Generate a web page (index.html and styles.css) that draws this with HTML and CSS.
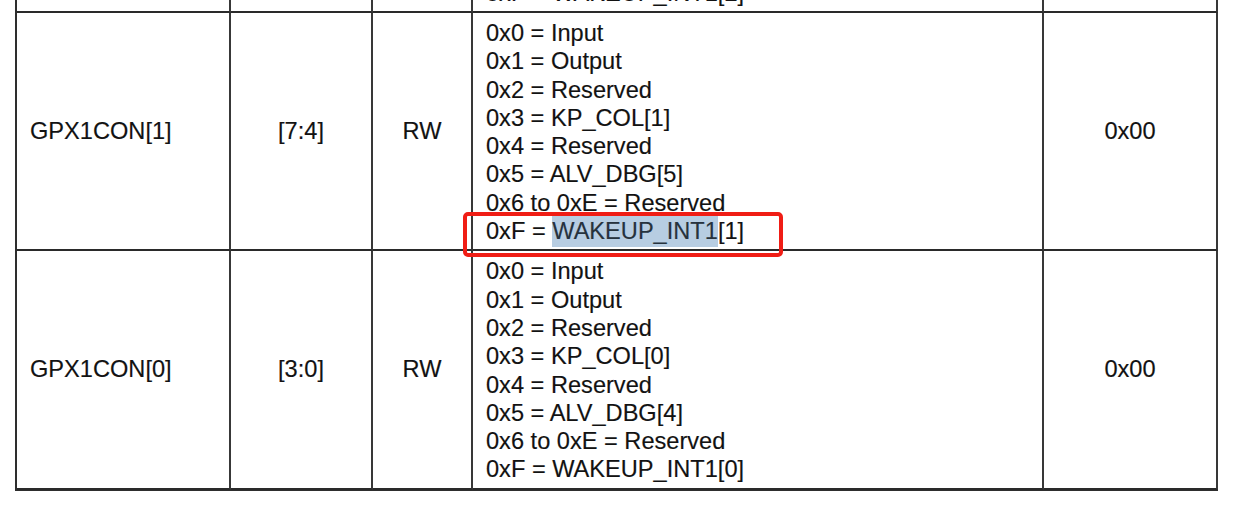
FILE: index.html
```html
<!DOCTYPE html>
<html lang="en">
<head>
<meta charset="utf-8">
<title>GPX1CON register</title>
<link rel="stylesheet" href="styles.css">
</head>
<body>
<div class="reg-table">
  <div class="cell cut"></div>
  <div class="cell cut"></div>
  <div class="cell cut"></div>
  <div class="cell cut desc"><div class="line">0xF = WAKEUP_INT1[2]</div></div>
  <div class="cell cut"></div>

  <div class="cell name">GPX1CON[1]</div>
  <div class="cell center">[7:4]</div>
  <div class="cell center">RW</div>
  <div class="cell desc">
    <div class="line">0x0 = Input</div>
    <div class="line">0x1 = Output</div>
    <div class="line">0x2 = Reserved</div>
    <div class="line">0x3 = KP_COL[1]</div>
    <div class="line">0x4 = Reserved</div>
    <div class="line">0x5 = ALV_DBG[5]</div>
    <div class="line">0x6 to 0xE = Reserved</div>
    <div class="line marked">0xF = <span class="hl">WAKEUP_INT1</span>[1]<span class="annot"></span></div>
  </div>
  <div class="cell center">0x00</div>

  <div class="cell name">GPX1CON[0]</div>
  <div class="cell center">[3:0]</div>
  <div class="cell center">RW</div>
  <div class="cell desc">
    <div class="line">0x0 = Input</div>
    <div class="line">0x1 = Output</div>
    <div class="line">0x2 = Reserved</div>
    <div class="line">0x3 = KP_COL[0]</div>
    <div class="line">0x4 = Reserved</div>
    <div class="line">0x5 = ALV_DBG[4]</div>
    <div class="line">0x6 to 0xE = Reserved</div>
    <div class="line">0xF = WAKEUP_INT1[0]</div>
  </div>
  <div class="cell center">0x00</div>
</div>
</body>
</html>
```
FILE: styles.css
```css
html, body {
  margin: 0;
  padding: 0;
  background: #ffffff;
}
body {
  height: 505px;
  overflow: hidden;
  font-family: "Liberation Sans", Arial, Helvetica, sans-serif;
  font-size: 23.6px;
  line-height: 28.3px;
  color: #121212;
  -webkit-text-stroke: 0.15px #121212;
}
.reg-table {
  display: grid;
  grid-template-columns: 214px 142px 100px 571px 174px;
  grid-template-rows: 13px auto auto;
  width: 1203px;
  margin-left: 15px;
  border-left: 2px solid #2e2e2e;
  box-sizing: border-box;
  border-bottom: 1px solid #2e2e2e;
}
.cell {
  box-sizing: border-box;
  border-right: 2px solid #383838;
  border-bottom: 2px solid #2a2a2a;
  display: flex;
  align-items: center;
}
.cell.name {
  padding-left: 13px;
}
.cell.center {
  justify-content: center;
}
.cell.desc {
  flex-direction: column;
  align-items: flex-start;
  padding: 6px 0 4px 13px;
}
.cell.cut {
  overflow: hidden;
  padding-top: 0;
}
.cell.cut.desc {
  justify-content: flex-end;
  padding-bottom: 4px;
}
.line {
  white-space: nowrap;
  flex: none;
}
.marked {
  position: relative;
}
.hl {
  background: #b7cde2;
  color: #26323d;
  -webkit-text-stroke: 0.15px #26323d;
  padding: 2px 0 3px;
}
.annot {
  position: absolute;
  left: -23px;
  top: -5px;
  width: 320px;
  height: 45px;
  box-sizing: border-box;
  border: 4.5px solid #f01d15;
  border-radius: 5px;
  pointer-events: none;
}
```
